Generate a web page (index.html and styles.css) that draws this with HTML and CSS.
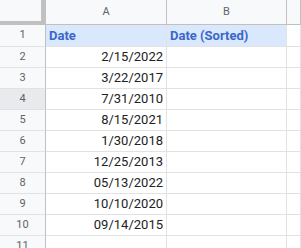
FILE: index.html
```html
<!DOCTYPE html>
<html lang="en">
<head>
    <meta charset="UTF-8">
    <title>Dates</title>
    <link rel="stylesheet" href="styles.css">
</head>
<body>
    <div class="sheet">
        <div class="corner"></div>
        <div class="colhead">A</div>
        <div class="colhead">B</div>
        <div class="colhead"></div>

        <div class="rowhead">1</div>
        <div class="cell title">Date</div>
        <div class="cell title">Date (Sorted)</div>
        <div class="cell"></div>

        <div class="rowhead">2</div>
        <div class="cell num">2/15/2022</div>
        <div class="cell"></div>
        <div class="cell"></div>

        <div class="rowhead">3</div>
        <div class="cell num">3/22/2017</div>
        <div class="cell"></div>
        <div class="cell"></div>

        <div class="rowhead active">4</div>
        <div class="cell num">7/31/2010</div>
        <div class="cell"></div>
        <div class="cell"></div>

        <div class="rowhead">5</div>
        <div class="cell num">8/15/2021</div>
        <div class="cell"></div>
        <div class="cell"></div>

        <div class="rowhead">6</div>
        <div class="cell num">1/30/2018</div>
        <div class="cell"></div>
        <div class="cell"></div>

        <div class="rowhead">7</div>
        <div class="cell num">12/25/2013</div>
        <div class="cell"></div>
        <div class="cell"></div>

        <div class="rowhead">8</div>
        <div class="cell num">05/13/2022</div>
        <div class="cell"></div>
        <div class="cell"></div>

        <div class="rowhead">9</div>
        <div class="cell num">10/10/2020</div>
        <div class="cell"></div>
        <div class="cell"></div>

        <div class="rowhead">10</div>
        <div class="cell num">09/14/2015</div>
        <div class="cell"></div>
        <div class="cell"></div>

        <div class="rowhead">11</div>
        <div class="cell"></div>
        <div class="cell"></div>
        <div class="cell"></div>
    </div>
</body>
</html>
```

FILE: styles.css
```css
body {
    margin: 0;
    background: white;
    font-family: Roboto, "Liberation Sans", Arial, sans-serif;
    overflow: hidden;
}
.sheet {
    display: grid;
    grid-template-columns: 46px 121px 120px 1fr;
    grid-template-rows: 25px 22px repeat(10, 21px);
    width: 301px;
}
.sheet > div {
    box-sizing: border-box;
    border-right: 1px solid #e2e2e2;
    border-bottom: 1px solid #e2e2e2;
    white-space: nowrap;
    overflow: hidden;
}
.sheet > .corner {
    background: #f8f9fa;
    border-right: 5px solid #c0c0c0;
    border-bottom: 4px solid #c0c0c0;
}
.sheet > .colhead {
    background: #f8f9fa;
    border-right: 1px solid #c0c0c0;
    border-bottom: 1px solid #c0c0c0;
    color: #5f6368;
    font-size: 11px;
    text-align: center;
    line-height: 24px;
}
.sheet > .rowhead {
    background: #f8f9fa;
    border-right: 1px solid #c0c0c0;
    color: #5f6368;
    font-size: 11px;
    text-align: center;
    line-height: 20px;
}
.sheet > .rowhead.active {
    background: #e8eaed;
}
.cell {
    font-size: 13px;
    color: #222;
    line-height: 20px;
    padding: 0 3px;
}
.title {
    background: #d9e8fc;
    color: #3a67c9;
    font-weight: bold;
    line-height: 21px;
}
.num {
    text-align: right;
}
```
